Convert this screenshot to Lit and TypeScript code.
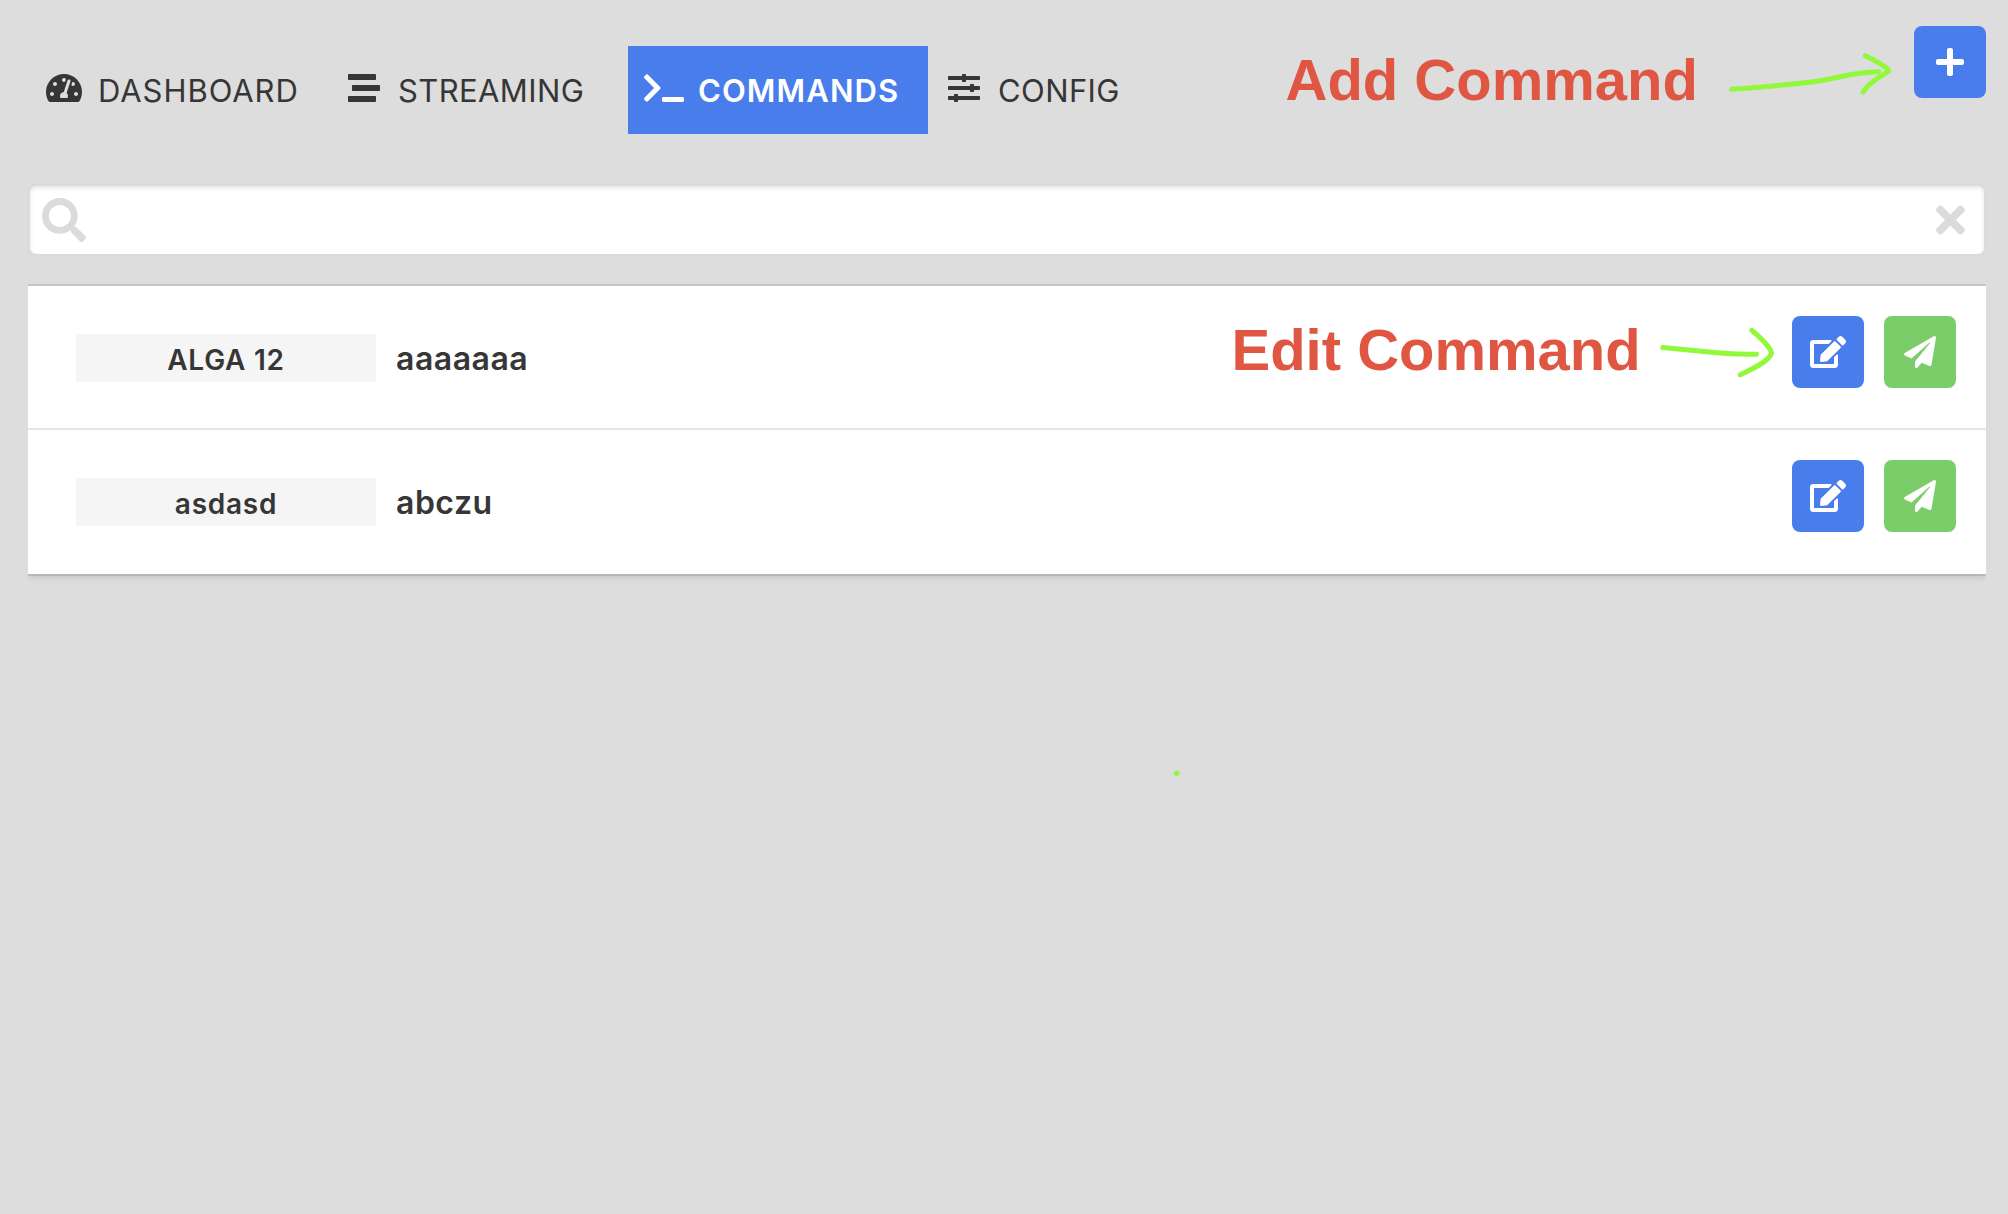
import { LitElement, html, css, svg } from "lit";
import { customElement, property } from "lit/decorators.js";
import { classMap } from "lit/directives/class-map.js";

interface Glyph {
  w: number;
  d: string;
}

const GLYPHS: Record<string, Glyph> = {
  gauge: {
    w: 576,
    d: "M288 32C128.94 32 0 160.94 0 320c0 52.8 14.25 102.26 39.06 144.8 5.61 9.62 16.3 15.2 27.44 15.2h443c11.14 0 21.83-5.58 27.44-15.2C561.75 422.26 576 372.8 576 320c0-159.06-128.94-288-288-288zm0 64c14.71 0 26.58 10.13 30.32 23.65-1.11 2.26-2.64 4.23-3.45 6.67l-9.22 27.67c-5.13 3.49-10.97 6.01-17.64 6.01-17.67 0-32-14.33-32-32S270.33 96 288 96zM96 384c-17.67 0-32-14.33-32-32s14.33-32 32-32 32 14.33 32 32-14.33 32-32 32zm48-160c-17.67 0-32-14.33-32-32s14.33-32 32-32 32 14.33 32 32-14.33 32-32 32zm246.77-72.41l-61.33 184C343.13 347.33 352 364.54 352 384c0 11.72-3.38 22.55-8.88 32H232.88c-5.5-9.45-8.88-20.28-8.88-32 0-33.94 26.5-61.43 59.9-63.59l61.34-184.01c4.17-12.56 17.73-19.45 30.36-15.17 12.57 4.19 19.35 17.79 15.17 30.36zm14.66 57.2l15.52-46.55c3.47-1.29 7.13-2.23 11.05-2.23 17.67 0 32 14.33 32 32s-14.33 32-32 32c-11.38-.01-20.89-6.28-26.57-15.22zM480 384c-17.67 0-32-14.33-32-32s14.33-32 32-32 32 14.33 32 32-14.33 32-32 32z",
  },
  stream: {
    w: 512,
    d: "M16 128h416c8.84 0 16-7.16 16-16V48c0-8.84-7.16-16-16-16H16C7.16 32 0 39.16 0 48v64c0 8.84 7.16 16 16 16zm480 80H80c-8.84 0-16 7.16-16 16v64c0 8.84 7.16 16 16 16h416c8.84 0 16-7.16 16-16v-64c0-8.84-7.16-16-16-16zm-64 176H16c-8.84 0-16 7.16-16 16v64c0 8.84 7.16 16 16 16h416c8.84 0 16-7.16 16-16v-64c0-8.84-7.16-16-16-16z",
  },
  terminal: {
    w: 640,
    d: "M257.981 272.971L63.638 467.314c-9.373 9.373-24.569 9.373-33.941 0L7.029 444.647c-9.357-9.357-9.375-24.522-.04-33.901L161.011 256 6.99 101.255c-9.335-9.379-9.317-24.544.04-33.901l22.667-22.667c9.373-9.373 24.569-9.373 33.941 0L257.981 239.03c9.373 9.372 9.373 24.568 0 33.941zM640 456v-32c0-13.255-10.745-24-24-24H312c-13.255 0-24 10.745-24 24v32c0 13.255 10.745 24 24 24h304c13.255 0 24-10.745 24-24z",
  },
  sliders: {
    w: 512,
    d: "M496 384H160v-16c0-8.8-7.2-16-16-16h-32c-8.8 0-16 7.2-16 16v16H16c-8.8 0-16 7.2-16 16v32c0 8.8 7.2 16 16 16h80v16c0 8.8 7.2 16 16 16h32c8.8 0 16-7.2 16-16v-16h336c8.8 0 16-7.2 16-16v-32c0-8.8-7.2-16-16-16zm0-160h-80v-16c0-8.8-7.2-16-16-16h-32c-8.8 0-16 7.2-16 16v16H16c-8.8 0-16 7.2-16 16v32c0 8.8 7.2 16 16 16h336v16c0 8.8 7.2 16 16 16h32c8.8 0 16-7.2 16-16v-16h80c8.8 0 16-7.2 16-16v-32c0-8.8-7.2-16-16-16zm0-160H288V48c0-8.8-7.2-16-16-16h-32c-8.8 0-16 7.2-16 16v16H16C7.2 64 0 71.2 0 80v32c0 8.8 7.2 16 16 16h208v16c0 8.8 7.2 16 16 16h32c8.8 0 16-7.2 16-16v-16h208c8.8 0 16-7.2 16-16V80c0-8.8-7.2-16-16-16z",
  },
  plus: {
    w: 448,
    d: "M416 208H272V64c0-17.67-14.33-32-32-32h-32c-17.67 0-32 14.33-32 32v144H32c-17.67 0-32 14.33-32 32v32c0 17.67 14.33 32 32 32h144v144c0 17.67 14.33 32 32 32h32c17.67 0 32-14.33 32-32V304h144c17.67 0 32-14.33 32-32v-32c0-17.67-14.33-32-32-32z",
  },
  search: {
    w: 512,
    d: "M505 442.7L405.3 343c-4.5-4.5-10.6-7-17-7H372c27.6-35.3 44-79.7 44-128C416 93.1 322.9 0 208 0S0 93.1 0 208s93.1 208 208 208c48.3 0 92.7-16.4 128-44v16.3c0 6.4 2.5 12.5 7 17l99.7 99.7c9.4 9.4 24.6 9.4 33.9 0l28.3-28.3c9.4-9.4 9.4-24.6.1-34zM208 336c-70.7 0-128-57.2-128-128 0-70.7 57.2-128 128-128 70.7 0 128 57.2 128 128 0 70.7-57.2 128-128 128z",
  },
  times: {
    w: 352,
    d: "M242.72 256l100.07-100.07c12.28-12.28 12.28-32.19 0-44.48l-22.24-22.24c-12.28-12.28-32.19-12.28-44.48 0L176 189.28 75.93 89.21c-12.28-12.28-32.19-12.28-44.48 0L9.21 111.45c-12.28 12.28-12.28 32.19 0 44.48L109.28 256 9.21 356.07c-12.28 12.28-12.28 32.19 0 44.48l22.24 22.24c12.28 12.28 32.2 12.28 44.48 0L176 322.72l100.07 100.07c12.28 12.28 32.2 12.28 44.48 0l22.24-22.24c12.28-12.28 12.28-32.19 0-44.48L242.72 256z",
  },
  edit: {
    w: 576,
    d: "M402.6 83.2l90.2 90.2c3.8 3.8 3.8 10 0 13.8L274.4 405.6l-92.8 10.3c-12.4 1.4-22.9-9.1-21.5-21.5l10.3-92.8L388.8 83.2c3.8-3.8 10-3.8 13.8 0zm162-22.9l-48.8-48.8c-15.2-15.2-39.9-15.2-55.2 0l-35.4 35.4c-3.8 3.8-3.8 10 0 13.8l90.2 90.2c3.8 3.8 10 3.8 13.8 0l35.4-35.4c15.2-15.3 15.2-40 0-55.2zM384 346.2V448H64V128h229.8c3.2 0 6.2-1.3 8.5-3.5l40-40c7.6-7.6 2.2-20.5-8.5-20.5H48C21.5 64 0 85.5 0 112v352c0 26.5 21.5 48 48 48h352c26.5 0 48-21.5 48-48V306.2c0-10.7-12.9-16-20.5-8.5l-40 40c-2.2 2.3-3.5 5.3-3.5 8.5z",
  },
  send: {
    w: 512,
    d: "M476 3.2L12.5 270.6c-18.1 10.4-15.8 35.6 2.2 43.2L121 358.4l287.3-253.2c5.5-4.9 13.3 2.6 8.6 8.3L176 407v80.5c0 23.6 28.5 32.9 42.5 15.8L282 426l124.6 52.2c14.2 6 30.4-2.9 33-18.2l72-432C515 7.8 493.3-6.8 476 3.2z",
  },
};

@customElement("ui-icon")
export class UiIcon extends LitElement {
  static styles = css`
    :host {
      display: inline-flex;
      justify-content: center;
      flex: none;
    }
    .glyph {
      display: block;
      height: 1em;
      fill: currentColor;
    }
  `;

  @property() name = "";

  render() {
    const g = GLYPHS[this.name];
    return html`<svg class="glyph" viewBox="0 0 ${g.w} 512">${svg`<path d=${g.d}></path>`}</svg>`;
  }
}

const TABS = [
  { icon: "gauge", label: "DASHBOARD", key: "dashboard" },
  { icon: "stream", label: "STREAMING", key: "streaming" },
  { icon: "terminal", label: "COMMANDS", key: "commands" },
  { icon: "sliders", label: "CONFIG", key: "config" },
];

const COMMANDS = [
  { tag: "ALGA 12", name: "aaaaaaa" },
  { tag: "asdasd", name: "abczu" },
];

@customElement("app-root")
export class AppRoot extends LitElement {
  static styles = css`
    :host {
      display: block;
      position: relative;
      box-sizing: border-box;
      height: 1214px;
      padding: 26px 22px 0 28px;
      overflow: hidden;
      background: #ddd;
      color: #363636;
      font-family: Inter, "Liberation Sans", sans-serif;
    }
    .top {
      display: flex;
      justify-content: space-between;
      align-items: flex-start;
      height: 158px;
    }
    .tabs {
      display: flex;
      padding-top: 20px;
    }
    .tab {
      display: flex;
      align-items: center;
      gap: 14px;
      box-sizing: border-box;
      width: 300px;
      height: 88px;
      padding: 0 16px 4px;
      font-size: 31px;
      letter-spacing: 0.4px;
      white-space: nowrap;
    }
    .tab ui-icon {
      width: 40px;
      font-size: 32px;
    }
    .tab span {
      padding-top: 4px;
    }
    .tab.dashboard {
      letter-spacing: 0.95px;
    }
    .tab.active {
      background: #4a7dec;
      color: #fff;
      font-weight: 600;
      letter-spacing: 1.1px;
    }
    .btn {
      display: flex;
      align-items: center;
      justify-content: center;
      width: 72px;
      height: 72px;
      padding: 0;
      border: 0;
      border-radius: 8px;
      background: #4a7dec;
      color: #fff;
      font-size: 32px;
    }
    .btn.green {
      background: #7bcd69;
    }
    .search {
      display: flex;
      align-items: center;
      justify-content: space-between;
      box-sizing: border-box;
      height: 72px;
      padding: 0 19px 0 12px;
      border: 2px solid #dbdbdb;
      border-radius: 8px;
      background: #fff;
      box-shadow: inset 0 2px 4px rgba(10, 10, 10, 0.1);
      color: #dbdbdb;
      font-size: 44px;
    }
    .search .clear {
      font-size: 42px;
    }
    .list {
      margin-top: 30px;
      background: #fff;
      box-shadow:
        0 4px 6px rgba(10, 10, 10, 0.1),
        0 0 0 2px rgba(10, 10, 10, 0.1);
      clip-path: inset(-10px 0 -20px 0);
    }
    .row {
      display: flex;
      align-items: flex-start;
      box-sizing: border-box;
      height: 144px;
      padding: 30px 30px 0 48px;
    }
    .row:not(:last-child) {
      border-bottom: 2px solid #e5e5e5;
    }
    .tag {
      width: 300px;
      height: 48px;
      margin-top: 18px;
      background: #f5f5f5;
      font-size: 28px;
      font-weight: 600;
      letter-spacing: 0.75px;
      line-height: 52px;
      text-align: center;
    }
    .name {
      flex: 1;
      margin: 19px 0 0 20px;
      font-size: 32px;
      font-weight: 600;
      letter-spacing: 0.5px;
      line-height: 48px;
    }
    .actions {
      display: flex;
      gap: 20px;
    }
    .note {
      position: absolute;
      color: #df5643;
      font: bold 58px/64px "Liberation Sans", Arial, sans-serif;
      white-space: nowrap;
    }
    .note.add {
      left: 1285.5px;
      top: 48px;
    }
    .note.edit {
      left: 1231.5px;
      top: 318px;
    }
    .ink {
      position: absolute;
      left: 0;
      top: 0;
      width: 2008px;
      height: 1214px;
      fill: none;
      stroke: #91f83a;
      stroke-width: 5;
      stroke-linecap: round;
      stroke-linejoin: round;
      pointer-events: none;
    }
    .dot {
      fill: #91f83a;
      stroke: none;
    }
  `;

  render() {
    return html`
      <header class="top">
        <nav class="tabs">
          ${TABS.map(
            (t) => html`<div class=${classMap({ tab: true, active: t.key === "commands", [t.key]: true })}>
              <ui-icon name=${t.icon}></ui-icon><span>${t.label}</span>
            </div>`,
          )}
        </nav>
        <button class="btn"><ui-icon name="plus"></ui-icon></button>
      </header>
      <div class="search">
        <ui-icon name="search"></ui-icon>
        <ui-icon class="clear" name="times"></ui-icon>
      </div>
      <main class="list">
        ${COMMANDS.map(
          (c) => html`<div class="row">
            <div class="tag">${c.tag}</div>
            <div class="name">${c.name}</div>
            <div class="actions">
              <button class="btn"><ui-icon name="edit"></ui-icon></button>
              <button class="btn green"><ui-icon name="send"></ui-icon></button>
            </div>
          </div>`,
        )}
      </main>
      <div class="note add">Add Command</div>
      <div class="note edit">Edit Command</div>
      <svg class="ink" viewBox="0 0 2008 1214">
        <path d="M1731.5 89.3C1757 88 1783 85 1808 82.500S1850 72 1878.500 71.700"></path>
        <path d="M1865.300 55.700C1872 59 1883 64.500 1887.500 69Q1889.500 70.500 1887.500 72C1880 77 1869 82 1863 92"></path>
        <path d="M1662.700 347.500C1680 349 1700 351 1717 352.700S1745 354 1756.500 354.300"></path>
        <path d="M1751.700 330.300C1760 337 1771 348 1771.500 353C1770 361 1752 369 1740.300 374.800"></path>
        <circle class="dot" cx="1176.700" cy="773.300" r="2.700"></circle>
      </svg>
    `;
  }
}
